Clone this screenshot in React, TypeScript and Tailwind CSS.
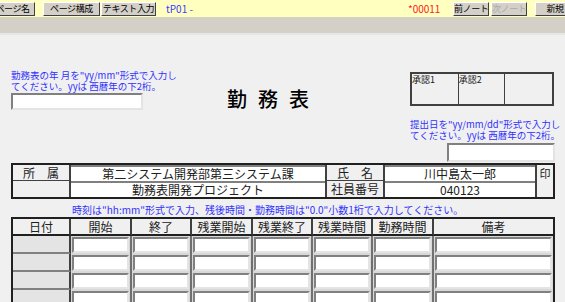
import React from "react"

type ToolButtonProps = { label: string; className: string; disabled?: boolean }

function ToolButton({ label, className, disabled = false }: ToolButtonProps) {
  return (
    <button
      disabled={disabled}
      className={`h-[14px] shrink-0 overflow-hidden whitespace-nowrap border border-t-white border-l-white border-r-[#404040] border-b-[#404040] bg-[#d4d0c8] text-[9px] leading-[12px] tracking-[-0.4px] ${
        disabled ? "text-[#a8a8a8]" : "text-black"
      } ${className}`}
    >
      {label}
    </button>
  )
}

// white input box with a sunken border
function Sunken({ className }: { className: string }) {
  return (
    <div
      className={`border-2 border-t-[#808080] border-l-[#808080] border-r-[#e4e4e4] border-b-[#e4e4e4] bg-white ${className}`}
    />
  )
}

const timeHeaders = ["日付", "開始", "終了", "残業開始", "残業終了", "残業時間", "勤務時間", "備考"]
const rows = [0, 1, 2, 3]

export default function App() {
  return (
    <div className="min-h-screen bg-[#f0f0f0] font-['Noto_Sans_CJK_JP','Noto_Sans',sans-serif] text-[#202020]">
      {/* toolbar */}
      <div className="flex h-[17px] items-center overflow-hidden bg-[#ffffc0]">
        <ToolButton label="ページ名" className="-ml-[10px] w-[45px]" />
        <ToolButton label="ページ構成" className="ml-[8px] w-[57px]" />
        <ToolButton label="テキスト入力" className="ml-[1px] w-[55px]" />
        <span className="ml-[10px] w-[242px] shrink-0 text-[10px] leading-[12px] text-[#3c3cff]">tP01 -</span>
        <span className="w-[45px] shrink-0 text-[10px] leading-[12px] text-[#ff2020]">*00011</span>
        <ToolButton label="前ノート" className="w-[36px]" />
        <ToolButton label="次ノート" disabled className="ml-[2px] w-[36px]" />
        <ToolButton label="新規" className="ml-[8px] w-[40px]" />
      </div>
      <div className="h-[18px] border-b-2 border-[#e6e6e6] bg-[#d4d0c8]" />

      <div className="pl-[11px] pr-[10px]">
        {/* heading area */}
        <div className="flex pt-[35px]">
          <div className="w-[216px] shrink-0">
            <p className="whitespace-nowrap text-[9.5px] leading-[11px] text-[#3030ff]">
              勤務表の年 月を"yy/mm"形式で入力し
              <br />
              てください。yyは 西暦年の下2桁。
            </p>
            <Sunken className="mt-[1px] h-[17px] w-[132px]" />
          </div>
          <h1 className="mt-[17px] text-[20px] font-medium leading-[24px] tracking-[11px] text-black">勤務表</h1>
          <div className="ml-auto w-[145px] pt-[2px]">
            <div className="grid h-[34px] w-[144px] grid-cols-3 border-2 border-[#404040]">
              <div className="border-r border-[#404040] text-[9px] leading-[12px]">承認1</div>
              <div className="border-r border-[#404040] text-[9px] leading-[12px]">承認2</div>
              <div />
            </div>
            <p className="mt-[13px] whitespace-nowrap text-[9.5px] leading-[11px] text-[#3030ff]">
              提出日を"yy/mm/dd"形式で入力し
              <br />
              てください。yyは 西暦年の下2桁。
            </p>
            <Sunken className="mt-[2px] ml-auto h-[19px] w-[108px]" />
          </div>
        </div>

        {/* section / name block */}
        <div className="mt-[1px] grid h-[36px] grid-cols-[58px_254px_60px_150px_18px] grid-rows-[16px_16px] border-2 border-[#202020] text-[12px]">
          <div className="flex items-center justify-center border-r-2 border-b border-[#404040] bg-[#f0f0f0]">所　属</div>
          <div className="flex items-center justify-center border-t-2 border-[#808080] bg-white">第二システム開発部第三システム課</div>
          <div className="flex items-center justify-center border-x-2 border-b border-[#404040] bg-[#f0f0f0]">氏　名</div>
          <div className="flex items-center justify-center border-t-2 border-[#808080] bg-white">川中島太一郎</div>
          <div className="row-span-2 flex items-start justify-center border-l-2 border-[#404040] bg-[#f0f0f0] text-[11px] leading-[16px]">印</div>
          <div className="border-r-2 border-[#404040] bg-[#f0f0f0]" />
          <div className="flex items-center justify-center border-t-2 border-[#808080] bg-white">勤務表開発プロジェクト</div>
          <div className="flex items-center justify-center border-x-2 border-[#404040] bg-[#f0f0f0]">社員番号</div>
          <div className="flex items-center justify-center border-t-2 border-[#808080] bg-white">040123</div>
        </div>

        <p className="mt-[5px] whitespace-nowrap pl-[61px] text-[10px] leading-[11px] text-[#3030ff]">
          時刻は"hh:mm"形式で入力、残後時間・勤務時間は"0.0"小数1桁で入力してください。
        </p>

        {/* time sheet */}
        <div className="mt-[2px] grid grid-cols-[58px_61px_60px_61px_60px_60px_61px_119px] border-2 border-[#202020] text-[12px]">
          {timeHeaders.map((h, i) => (
            <div
              key={h}
              className={`flex h-[17px] items-center justify-center border-b-2 border-b-[#202020] bg-[#f0f0f0] ${
                i < timeHeaders.length - 1 ? "border-r-2 border-r-[#404040]" : ""
              }`}
            >
              {h}
            </div>
          ))}
          {rows.map((r) => (
            <React.Fragment key={r}>
              <div className="h-[18px] border-r-2 border-b-2 border-r-[#404040] border-b-[#808080] bg-[#e4e4e4]" />
              {timeHeaders.slice(1).map((h, i) => (
                <div
                  key={h}
                  className={`h-[18px] bg-[#d8d8d8] p-[1px] ${i < timeHeaders.length - 2 ? "border-r-2 border-[#707070]" : ""}`}
                >
                  <Sunken className="h-full w-full" />
                </div>
              ))}
            </React.Fragment>
          ))}
        </div>
      </div>
    </div>
  )
}
